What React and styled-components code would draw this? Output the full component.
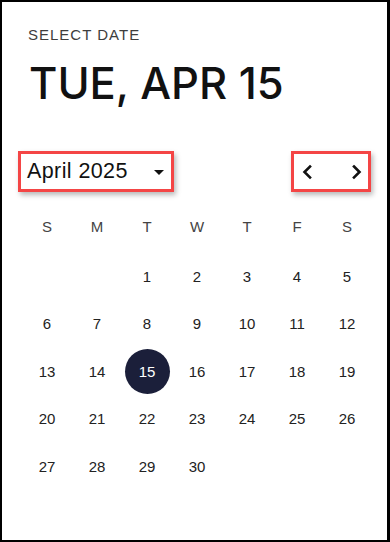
import React from 'react';
import styled, { createGlobalStyle } from 'styled-components';

const GlobalStyle = createGlobalStyle`
  html, body {
    margin: 0;
    padding: 0;
    background: #ffffff;
  }

  body {
    font-family: "Liberation Sans", Arial, sans-serif;
  }
`;

const Frame = styled.div`
  box-sizing: border-box;
  width: 390px;
  height: 542px;
  border: 2px solid #000;
  border-right-width: 3px;
  padding: 24px 0 0 26px;
  background: #fff;
`;

const Overline = styled.div`
  font-size: 15px;
  line-height: 18px;
  letter-spacing: 1px;
  color: #3d3d3d;
  text-transform: uppercase;
`;

const Heading = styled.h1`
  margin: 14px 0 0 1px;
  font-family: Inter, "Liberation Sans", sans-serif;
  font-weight: 500;
  font-size: 43.5px;
  line-height: 50px;
  color: #111;
`;

const Toolbar = styled.div`
  display: flex;
  justify-content: space-between;
  align-items: center;
  margin: 43px 16px 0 -10px;
`;

const Highlight = styled.div`
  box-sizing: border-box;
  display: flex;
  align-items: center;
  gap: ${(p) => p.$gap || 0}px;
  height: 41px;
  padding-left: ${(p) => p.$pad || 0}px;
  border: 3px solid #f44545;
  box-shadow: 2px 3px 5px rgba(0, 0, 0, 0.28);
`;

const MonthButton = styled.button`
  display: flex;
  align-items: center;
  gap: 26px;
  height: 100%;
  padding: 0 7px 0 6px;
  border: none;
  background: transparent;
  font-family: "Liberation Sans", Arial, sans-serif;
  font-size: 21.5px;
  letter-spacing: 0.4px;
  color: #111;
  cursor: pointer;
`;

const Caret = styled.span`
  width: 0;
  height: 0;
  border-left: 5px solid transparent;
  border-right: 5px solid transparent;
  border-top: 5px solid #111;
  margin-top: 2px;
`;

const NavButton = styled.button`
  display: flex;
  align-items: center;
  justify-content: center;
  width: 22px;
  height: 100%;
  padding: 0;
  border: none;
  background: transparent;
  cursor: pointer;
`;

const Grid = styled.div`
  display: grid;
  grid-template-columns: repeat(7, 50px);
  margin-left: -6px;
`;

const Weekday = styled.div`
  display: flex;
  align-items: center;
  justify-content: center;
  height: 36px;
  margin-top: 16px;
  margin-bottom: 8.6px;
  font-size: 15px;
  color: #444;
`;

const DayCell = styled.div`
  display: flex;
  align-items: center;
  justify-content: center;
  height: 47.5px;
`;

const Day = styled.span`
  display: flex;
  align-items: center;
  justify-content: center;
  width: 45px;
  height: 45px;
  border-radius: 50%;
  font-size: 15px;
  color: ${(p) => (p.$selected ? '#fff' : '#222')};
  background: ${(p) => (p.$selected ? '#1b1f3a' : 'transparent')};
`;

const Chevron = ({ dir }) => (
  <svg width="12" height="16" viewBox="0 0 12 16" fill="none">
    <polyline
      points={dir === 'left' ? '9,2.5 3.5,8 9,13.5' : '3,2.5 8.5,8 3,13.5'}
      stroke="#111"
      strokeWidth="2.6"
      strokeLinecap="square"
      strokeLinejoin="miter"
    />
  </svg>
);

const weekdays = ['S', 'M', 'T', 'W', 'T', 'F', 'S'];
const firstOffset = 2;
const daysInMonth = 30;
const selected = 15;

const App = () => {
  const cells = [];
  for (let i = 0; i < firstOffset; i += 1) cells.push(null);
  for (let d = 1; d <= daysInMonth; d += 1) cells.push(d);

  return (
    <>
      <GlobalStyle />
      <Frame>
        <Overline>Select date</Overline>
        <Heading>TUE, APR 15</Heading>
        <Toolbar>
          <Highlight>
            <MonthButton type="button">
              April 2025
              <Caret />
            </MonthButton>
          </Highlight>
          <Highlight $gap={28} $pad={2}>
            <NavButton type="button" aria-label="Previous month">
              <Chevron dir="left" />
            </NavButton>
            <NavButton type="button" aria-label="Next month">
              <Chevron dir="right" />
            </NavButton>
          </Highlight>
        </Toolbar>
        <Grid>
          {weekdays.map((w, i) => (
            <Weekday key={`w${i}`}>{w}</Weekday>
          ))}
          {cells.map((d, i) => (
            <DayCell key={`d${i}`}>
              {d && <Day $selected={d === selected}>{d}</Day>}
            </DayCell>
          ))}
        </Grid>
      </Frame>
    </>
  );
};

export default App;
